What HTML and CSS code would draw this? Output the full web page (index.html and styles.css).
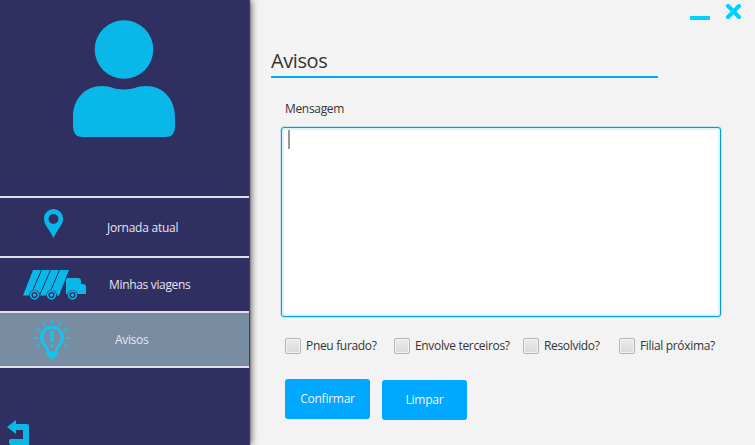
FILE: index.html
```html
<!DOCTYPE html>
<html lang="pt-BR">
<head>
<meta charset="utf-8">
<title>Avisos</title>
<link rel="stylesheet" href="styles.css">
</head>
<body>
<div class="app">
  <aside class="sidebar">
    <div class="profile">
      <svg width="102" height="118" viewBox="0 0 102 118" fill="#09b8e8">
        <circle cx="51" cy="29.5" r="29.3"/>
        <path d="M0 97C0 79 12 66 29 66C38 66 41 69.5 51 69.5S64 66 73 66C90 66 102 79 102 97V107Q102 117 92 117H10Q0 117 0 107Z"/>
      </svg>
    </div>
    <nav class="menu">
      <a class="item journey">
        <svg class="pin" width="20" height="30" viewBox="0 0 20 30"><path fill="#09b8e8" fill-rule="evenodd" d="M9.5 0A9.5 9.5 0 0 0 0 10C0 16 6 21 9.5 29C13 21 19 16 19 10A9.5 9.5 0 0 0 9.5 0ZM9.5 5A5 5 0 1 1 9.5 15A5 5 0 1 1 9.5 5Z"/></svg>
        <span>Jornada atual</span>
      </a>
      <a class="item trips">
        <svg class="truck" width="64" height="30" viewBox="0 0 64 30">
          <g fill="#09b8e8">
            <path d="M10 0H18L7 25.500H0ZM19 0H27L16 25.500H8ZM28 0H36L25 25.500H17ZM37 0H46L36 25.500H26ZM43 10Q43 8 45 8H55Q58 8 58 11V14H60Q63 14 63 17V24H43Z"/>
          </g>
          <g fill="#2f2f61"><circle cx="11.500" cy="25" r="5.300"/><circle cx="28.500" cy="25" r="5.300"/><circle cx="49.500" cy="25" r="5.300"/></g>
          <g fill="none" stroke="#09b8e8" stroke-width="1.600"><circle cx="11.500" cy="25" r="3.900"/><circle cx="28.500" cy="25" r="3.900"/><circle cx="49.500" cy="25" r="3.900"/></g>
          <g fill="#09b8e8"><circle cx="11.500" cy="25" r="1.700"/><circle cx="28.500" cy="25" r="1.700"/><circle cx="49.500" cy="25" r="1.700"/></g>
        </svg>
        <span>Minhas viagens</span>
      </a>
      <a class="item notices">
        <svg class="bulb" width="36" height="40" viewBox="0 0 36 40" fill="none" stroke="#14c4f0">
          <path stroke-width="3" d="M13.500 31C13.500 26 7.500 24 7.500 17.500A10.500 10.500 0 0 1 28.500 17.500C28.500 24 22.500 26 22.500 31"/>
          <path fill="#14c4f0" stroke="none" d="M12.500 30.500Q18 32.500 23.500 30.500V35L20.500 37.500Q18 41 15.500 37.500L12.500 35ZM16 12Q18 10 20 12L19.500 22H16.500Z"/>
          <circle cx="18" cy="26" r="1.800" fill="#14c4f0" stroke="none"/>
          <path stroke-width="1.500" d="M18 0V4M9 2L11 5.500M27 2L25 5.500M2.500 8.500L6 10.500M33.500 8.500L30 10.500M0 18H4M32 18H36M2.500 27L6 25M33.500 27L30 25"/>
        </svg>
        <span>Avisos</span>
      </a>
    </nav>
    <a class="back">
      <svg width="23" height="26" viewBox="0 0 23 26" fill="#09b8e8"><path d="M0 7L9 0V4H20Q22 4 22 6V26H4L2 23V21Q2 19 4 19H16V10H9V14Z"/></svg>
    </a>
  </aside>
  <main class="content">
    <div class="window-controls">
      <svg width="52" height="17" viewBox="0 0 52 17"><path fill="#00d0ff" d="M0 12H20V16H0Z"/><path d="M38 2L49 13M49 2L38 13" stroke="#00d0ff" stroke-width="4" stroke-linecap="round"/></svg>
    </div>
    <h1 class="title"><span>Avisos</span></h1>
    <div class="field-label"><span>Mensagem</span></div>
    <div class="message"><div class="caret"></div></div>
    <div class="checks">
      <div class="check flat"><i class="box"></i><span>Pneu furado?</span></div>
      <div class="check third"><i class="box"></i><span>Envolve terceiros?</span></div>
      <div class="check solved"><i class="box"></i><span>Resolvido?</span></div>
      <div class="check branch"><i class="box"></i><span>Filial próxima?</span></div>
    </div>
    <div class="actions">
      <button class="btn confirm"><span>Confirmar</span></button>
      <button class="btn clear"><span>Limpar</span></button>
    </div>
  </main>
</div>
</body>
</html>
```
FILE: styles.css
```css
* { box-sizing: border-box; }
body {
  margin: 0;
  font: 12px/16px "Open Sans", "Noto Sans", sans-serif;
  letter-spacing: -0.33px;
  color: #333;
  background: #f3f3f3;
}
.app { display: flex; width: 755px; height: 445px; overflow: hidden; }
.sidebar {
  display: flex;
  flex-direction: column;
  flex: none;
  width: 249px;
  height: 445px;
  background: #2f2f61;
  color: #e6e5ef;
  box-shadow: 1px 0 1px #444, 2px 0 7px #555;
  z-index: 1;
}
.profile { flex: none; height: 196px; padding: 20px 0 0 73px; }
.profile svg, .item svg, .back svg, .window-controls svg { display: block; flex: none; }
.menu { flex: none; border-top: 2px solid #e2deeb; }
.item { display: flex; align-items: center; height: 55px; border-bottom: 2px solid #e2deeb; }
.item span { white-space: nowrap; }
.journey { height: 60px; letter-spacing: -0.25px; }
.pin { margin: -6px 43px 0 44px; }
.truck { margin: 1px 22px 0 23px; }
.notices { background: #788da2; }
.bulb { margin: 0 45px 0 34px; }
.item.journey span { margin-top: 2px; }
.item.trips span, .item.notices span { margin-top: 0; }
.back { flex: none; margin: 52px 0 0 7px; }
.content { flex: 1; min-width: 0; padding-left: 22px; }
.window-controls { height: 48px; padding: 4px 0 0 419px; }
.title {
  width: 387px;
  height: 30px;
  margin: 0;
  border-bottom: 2px solid #00a8ff;
  font-size: 20px;
  line-height: 25px;
  font-weight: 400;
  letter-spacing: -0.4px;
}
.field-label { margin: 23px 0 0 14px; height: 16px; }
.message {
  width: 440px;
  height: 190px;
  margin: 10px 0 0 10px;
  padding: 2px 0 0 6px;
  background: #fff;
  border: 1px solid #039ed3;
  border-radius: 3px;
  box-shadow: 0 0 0 1px #c0e5f1, inset 0 0 0 2px #dff1f8;
}
.caret { width: 2px; height: 19px; background: #999; }
.checks { display: flex; margin: 21px 0 0 14px; height: 16px; }
.check { display: flex; align-items: center; gap: 5px; white-space: nowrap; }
.flat { width: 109px; }
.third { width: 129px; }
.solved { width: 96px; }
.box {
  flex: none;
  width: 16px;
  height: 16px;
  border: 1px solid #b5b5b5;
  border-radius: 2px;
  background: linear-gradient(#ececec, #d9d9d9);
  box-shadow: inset 0 0 0 1px #f3f3f3;
}
.actions { display: flex; gap: 12px; margin: 25px 0 0 14px; }
.btn {
  width: 85px;
  height: 40px;
  padding: 0;
  border: 0;
  border-radius: 3px;
  background: #00a8ff;
  color: #f3f3f3;
  font: inherit;
  letter-spacing: -0.25px;
}
.clear { margin-top: 1px; }
```
